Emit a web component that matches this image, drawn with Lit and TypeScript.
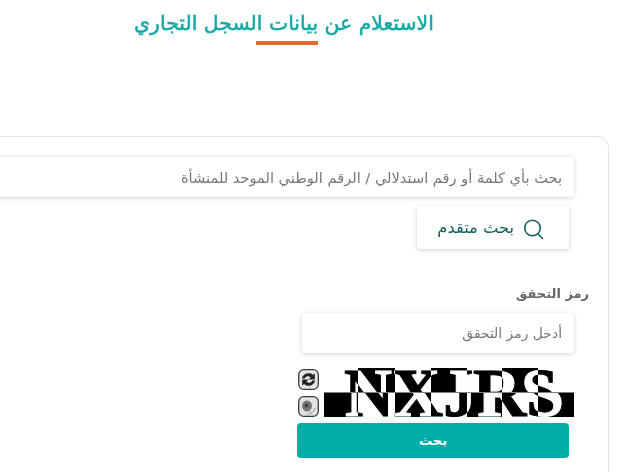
import { LitElement, html, css } from "lit";
import { customElement } from "lit/decorators.js";

@customElement("app-root")
export class AppRoot extends LitElement {
  static styles = css`
    :host { display: block; width: 617px; height: 472px; overflow: hidden; background: #fff; font-family: "DejaVu Sans", "Noto Sans", sans-serif; }
    .page { direction: rtl; display: flex; flex-direction: column; }
    .head { align-self: flex-end; display: flex; flex-direction: column; align-items: center; width: 568px; height: 136px; }
    h1 { margin: 10px 0 0; font-size: 20.4px; line-height: 26px; font-weight: 400; -webkit-text-stroke: 0.5px #14a8a4; color: #14a8a4; white-space: nowrap; }
    .rule { width: 62px; height: 4px; background: #e4692f; margin-top: 5px; margin-right: -6px; }
    .card { align-self: flex-end; margin-left: -40px; width: 649px; height: 400px; box-sizing: border-box; border: 1px solid #e3e3e3; border-radius: 12px; padding: 20px 34px 0 0; display: flex; flex-direction: column; align-items: flex-start; }
    .field { background: #fff; border-radius: 4px; box-shadow: 0 1px 5px rgba(0,0,0,.18); box-sizing: border-box; display: flex; align-items: center; color: #777; white-space: nowrap; }
    .search { width: 620px; height: 40px; padding-right: 12px; font-size: 14.6px; }
    .adv { margin: 9px 5px 0 0; width: 152px; height: 43px; border-radius: 4px; box-shadow: 0 1px 5px rgba(0,0,0,.18); display: flex; align-items: center; gap: 9px; padding-right: 24px; box-sizing: border-box; color: #14605e; font-size: 16.3px; }
    .adv svg { width: 22px; height: 22px; flex: none; margin-top: 3px; }
    label { margin: 35px -15px 0 0; font-size: 13px; font-weight: 700; line-height: 20px; color: #666; }
    .code { margin-top: 9px; width: 272px; height: 40px; padding-right: 12px; font-size: 13.9px; }
    .cap { margin-top: 15px; width: 276px; height: 49px; display: flex; direction: ltr; gap: 5px; }
    .btn { margin: 6px 5px 0 0; width: 272px; height: 35px; background: #00aea8; color: #fff; border-radius: 4px; display: flex; align-items: center; justify-content: center; font-size: 13px; font-weight: 700; }
    .captcha { width: 250px; height: 49px; display: block; flex: none; }
    .captcha text { font-family: "Liberation Serif", serif; font-weight: 700; font-size: 68px; fill: #fff; stroke: #fff; stroke-width: 1px; mix-blend-mode: difference; }
    .icons { width: 21px; padding-top: 1px; display: flex; flex-direction: column; gap: 6px; }
    .icons svg { width: 21px; height: 21px; display: block; }
  `;
  render() {
    return html`<div class="page">
      <div class="head"><h1>الاستعلام عن بيانات السجل التجاري</h1><div class="rule"></div></div>
      <div class="card">
        <div class="field search">بحث بأي كلمة أو رقم استدلالي / الرقم الوطني الموحد للمنشأة</div>
        <div class="adv">
          <svg viewBox="0 0 22 22" fill="none" stroke="#14605e" stroke-width="1.6"><circle cx="9.5" cy="10" r="7.8"/><path d="M15 16 20 21"/></svg>
          <span>بحث متقدم</span>
        </div>
        <label>رمز التحقق</label>
        <div class="field code">أدخل رمز التحقق</div>
        <div class="cap">
          <div class="icons">
            <svg viewBox="0 0 21 21"><rect x=".7" y=".7" width="19.6" height="19.6" rx="5" fill="#e6e6e6" stroke="#3a3a3a" stroke-width="1.3"/><path d="M3.800 9.500a6.800 6.800 0 0 1 11.200-3.600l1.800-1.700v6.300h-6.300l2.100-2.100a3.600 3.600 0 0 0-5.900 1.100z" fill="#222"/><path d="M17.200 11.500a6.800 6.800 0 0 1-11.200 3.600l-1.800 1.700v-6.300h6.300l-2.100 2.100a3.600 3.600 0 0 0 5.900-1.100z" fill="#222"/></svg>
            <svg viewBox="0 0 21 21"><rect x=".7" y=".7" width="19.6" height="19.6" rx="5" fill="#e2e2e2" stroke="#3a3a3a" stroke-width="1.3"/><ellipse cx="9" cy="10" rx="5" ry="5.500" fill="#777"/><circle cx="8.500" cy="9.500" r="2" fill="#444"/><path d="M11 17c3 0 5-2 6-5M9 18.500c4 0 7-3 8.500-7" stroke="#aaa" fill="none"/></svg>
          </div>
          <svg class="captcha" viewBox="0 0 250 49" aria-label="captcha">
            <defs>
              <clipPath id="t"><rect width="250" height="24.500"/></clipPath>
              <clipPath id="b"><rect y="24.500" width="250" height="24.500"/></clipPath>
            </defs>
            <rect width="250" height="49" fill="#fff"/>
            <rect x="34" width="37" height="24.500"/>
            <rect x="107" width="36" height="24.500"/>
            <rect x="178" width="36" height="24.500"/>
            <rect y="24.500" width="34" height="24.500"/>
            <rect x="71" y="24.500" width="36" height="24.500"/>
            <rect x="143" y="24.500" width="35" height="24.500"/>
            <rect x="214" y="24.500" width="36" height="24.500"/>
            <text x="20" y="47" clip-path="url(#t)" textLength="214" lengthAdjust="spacingAndGlyphs">NXJRS</text>
            <text x="21" y="47.500" clip-path="url(#b)" textLength="219" lengthAdjust="spacingAndGlyphs">NXJRS</text>
          </svg>
        </div>
        <div class="btn">بحث</div>
      </div>
    </div>`;
  }
}
